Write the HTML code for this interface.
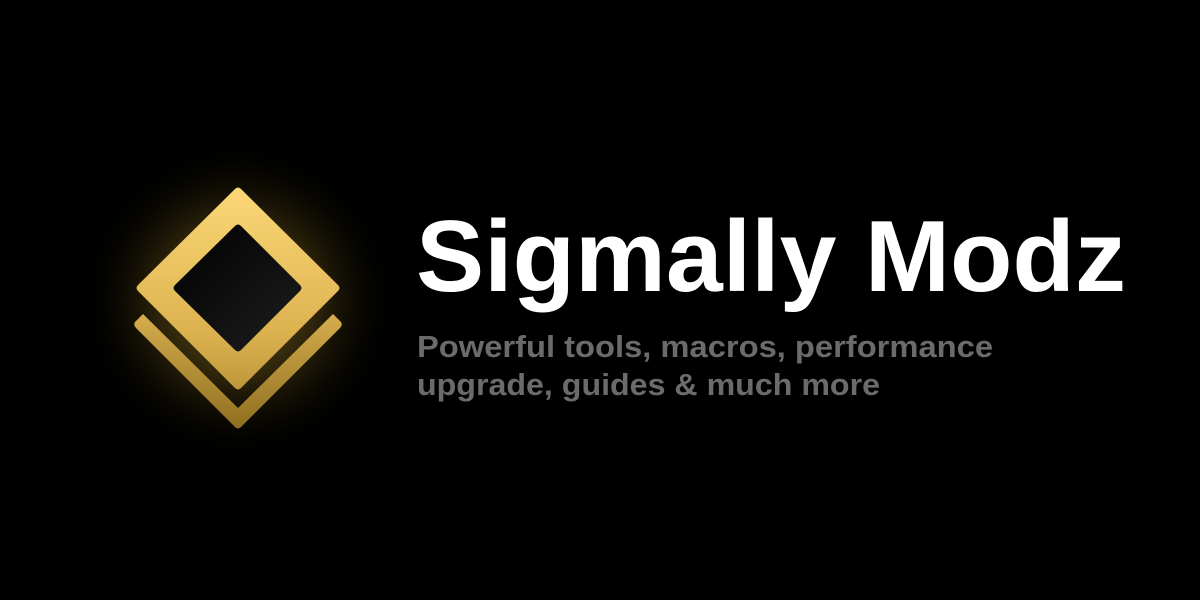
<!DOCTYPE html>
<html><head><meta charset="utf-8"><style>
html,body{margin:0;padding:0;background:#000;width:1200px;height:600px;overflow:hidden}
</style></head><body>
<svg width="1200" height="600" viewBox="0 0 1200 600" xmlns="http://www.w3.org/2000/svg">
<defs>
<radialGradient id="glow" cx="238" cy="300" r="160" gradientUnits="userSpaceOnUse">
<stop offset="0" stop-color="#8a7026" stop-opacity="0.85"/>
<stop offset="0.5" stop-color="#4a3b10" stop-opacity="0.6"/>
<stop offset="1" stop-color="#000" stop-opacity="0"/>
</radialGradient>
<linearGradient id="gold" x1="0" y1="187" x2="0" y2="430" gradientUnits="userSpaceOnUse">
<stop offset="0" stop-color="#fdd877"/>
<stop offset="0.6" stop-color="#dcb24f"/>
<stop offset="1" stop-color="#a8842c"/>
</linearGradient>
<linearGradient id="chev" x1="0" y1="313" x2="0" y2="430" gradientUnits="userSpaceOnUse">
<stop offset="0" stop-color="#d7ae4e"/>
<stop offset="1" stop-color="#8e6e1f"/>
</linearGradient>
<linearGradient id="inner" x1="172" y1="223" x2="303" y2="354" gradientUnits="userSpaceOnUse">
<stop offset="0" stop-color="#000"/>
<stop offset="1" stop-color="#1e1e1e"/>
</linearGradient>
</defs>
<rect width="1200" height="600" fill="#000"/>
<ellipse cx="238" cy="305" rx="160" ry="170" fill="url(#glow)"/>
<path d="M143 314 L238 408 L333 314 L341 322 Q343 325 340 328 L241 427 Q238 430 235 427 L136 328 Q133 325 135 322 Z" fill="url(#chev)"/>
<path d="M235 189 Q238 186 241 189 L338 285 Q341 288 338 291 L241 388 Q238 391 235 388 L138 291 Q135 288 138 285 Z" fill="url(#gold)"/>
<path d="M235 226 Q238 223 241 226 L300 285 Q303 288 300 291 L241 350 Q238 353 235 350 L175 291 Q172 288 175 285 Z" fill="url(#inner)"/>
<text x="416" y="291" font-family="Liberation Sans, sans-serif" font-weight="bold" font-size="101" fill="#fff" textLength="710" lengthAdjust="spacingAndGlyphs">Sigmally Modz</text>
<text x="417" y="357" font-family="Liberation Sans, sans-serif" font-weight="bold" font-size="30.5" fill="#6b6b6b" textLength="576" lengthAdjust="spacingAndGlyphs">Powerful tools, macros, performance</text>
<text x="417" y="395" font-family="Liberation Sans, sans-serif" font-weight="bold" font-size="30.5" fill="#6b6b6b" textLength="463" lengthAdjust="spacingAndGlyphs">upgrade, guides &amp; much more</text>
</svg>
</body></html>
